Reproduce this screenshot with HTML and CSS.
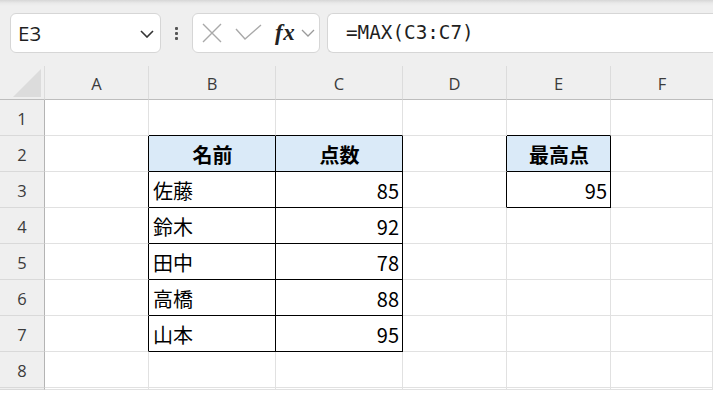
FILE: index.html
```html
<!DOCTYPE html>
<html lang="ja">
<head>
<meta charset="utf-8">
<title>Excel MAX</title>
<link rel="stylesheet" href="styles.css">
</head>
<body>
<div class="app">
  <div class="toolbar">
    <div class="namebox">
      <span class="name">E3</span>
      <svg class="chev" width="14" height="8" viewBox="0 0 14 8"><polyline points="1,1 7,7 13,1" fill="none" stroke="#333" stroke-width="1.6"/></svg>
    </div>
    <div class="dots"><i></i><i></i><i></i></div>
    <div class="fxbox">
      <svg class="ico" width="20" height="20" viewBox="0 0 20 20"><path d="M1 1 L19 19 M19 1 L1 19" stroke="#a9a9a9" stroke-width="1.4" fill="none"/></svg>
      <svg class="ico" width="28" height="18" viewBox="0 0 28 18"><polyline points="1,5 10,15 26,1" stroke="#a9a9a9" stroke-width="1.4" fill="none"/></svg>
      <span class="fx">fx</span>
      <svg class="chev2" width="14" height="9" viewBox="0 0 14 9"><polyline points="1,1 7,7 13,1" fill="none" stroke="#9a9a9a" stroke-width="1.3"/></svg>
    </div>
    <div class="formula">=MAX(C3:C7)</div>
  </div>
  <div class="sheet">
    <div class="corner"><span class="tri"></span></div>
    <div class="ch">A</div><div class="ch">B</div><div class="ch">C</div><div class="ch">D</div><div class="ch">E</div><div class="ch">F</div>

    <div class="rh">1</div>
    <div class="c"></div><div class="c bb"></div><div class="c bb"></div><div class="c"></div><div class="c bb"></div><div class="c"></div>

    <div class="rh">2</div>
    <div class="c br"></div><div class="c t hd">名前</div><div class="c t hd">点数</div><div class="c br"></div><div class="c t hd">最高点</div><div class="c"></div>

    <div class="rh">3</div>
    <div class="c br"></div><div class="c t">佐藤</div><div class="c t num">85</div><div class="c br"></div><div class="c t num">95</div><div class="c"></div>

    <div class="rh">4</div>
    <div class="c br"></div><div class="c t">鈴木</div><div class="c t num">92</div><div class="c"></div><div class="c"></div><div class="c"></div>

    <div class="rh">5</div>
    <div class="c br"></div><div class="c t">田中</div><div class="c t num">78</div><div class="c"></div><div class="c"></div><div class="c"></div>

    <div class="rh">6</div>
    <div class="c br"></div><div class="c t">高橋</div><div class="c t num">88</div><div class="c"></div><div class="c"></div><div class="c"></div>

    <div class="rh">7</div>
    <div class="c br"></div><div class="c t">山本</div><div class="c t num">95</div><div class="c"></div><div class="c"></div><div class="c"></div>

    <div class="rh">8</div>
    <div class="c"></div><div class="c"></div><div class="c"></div><div class="c"></div><div class="c"></div><div class="c"></div>

    <div class="rh"></div>
    <div class="c"></div><div class="c"></div><div class="c"></div><div class="c"></div><div class="c"></div><div class="c"></div>
  </div>
</div>
</body>
</html>
```

FILE: styles.css
```css
* { box-sizing: border-box; }
html, body { margin: 0; padding: 0; }
body {
  width: 713px;
  height: 398px;
  overflow: hidden;
  background: #ffffff;
  font-family: "Open Sans", "Noto Sans", sans-serif;
}
.app { width: 713px; height: 398px; overflow: hidden; }

.toolbar {
  height: 66px;
  background: linear-gradient(#d6d6d6 0px, #e9e9e9 3px, #efefef 6px, #efefef 100%);
  display: flex;
  align-items: flex-start;
  padding-top: 13px;
  padding-left: 10px;
  white-space: nowrap;
}
.namebox {
  width: 151px;
  height: 40px;
  background: #fff;
  border: 1px solid #d6d6d6;
  border-radius: 6px;
  display: flex;
  align-items: center;
  justify-content: space-between;
  padding: 0 6px 0 7px;
  flex: none;
}
.name { font-size: 20.5px; color: #1f1f1f; line-height: 1; margin-top: 1px; }
.chev { margin-top: 1px; }
.dots {
  width: 31px;
  height: 40px;
  display: flex;
  flex-direction: column;
  align-items: center;
  justify-content: center;
  gap: 2px;
  flex: none;
}
.dots i { display: block; width: 3px; height: 3px; background: #555; border-radius: 1px; }
.fxbox {
  width: 128px;
  height: 40px;
  background: #fff;
  border: 1px solid #d6d6d6;
  border-radius: 6px;
  display: flex;
  align-items: center;
  padding-left: 9px;
  flex: none;
}
.fxbox .ico:nth-child(1) { margin-right: 13px; }
.fxbox .ico:nth-child(2) { margin-right: 12px; margin-top: -1px; }
.fx {
  font-family: "Liberation Serif", "DejaVu Serif", serif;
  font-style: italic;
  font-weight: bold;
  font-size: 23px;
  color: #222;
  line-height: 1;
  margin-top: -2px;
  margin-right: 6px;
  letter-spacing: 0.5px;
}
.chev2 { margin-top: 1px; }
.formula {
  margin-left: 7px;
  width: 400px;
  height: 40px;
  background: #fff;
  border: 1px solid #d6d6d6;
  border-radius: 6px 0 0 6px;
  border-right: none;
  padding-left: 18px;
  font-family: "DejaVu Sans Mono", "Liberation Mono", monospace;
  font-size: 19.3px;
  line-height: 38px;
  color: #1f1f1f;
  flex: none;
}

.sheet {
  display: grid;
  grid-template-columns: 45px 104px 127px 127px 104px 104px 1fr;
  grid-template-rows: 34px repeat(8, 36px);
}
.corner {
  background: #efefef;
  border-right: 1px solid #dcdcdc;
  border-bottom: 1px solid #bdbdbd;
  position: relative;
}
.tri {
  position: absolute;
  right: 3px;
  bottom: 2px;
  width: 0;
  height: 0;
  border-style: solid;
  border-width: 0 0 28px 28px;
  border-color: transparent transparent #dcdcdc transparent;
}
.ch {
  background: #efefef;
  border-bottom: 1px solid #bdbdbd;
  border-right: 1px solid #dcdcdc;
  display: flex;
  align-items: center;
  justify-content: center;
  padding-top: 2px;
  font-size: 16.5px;
  color: #3b3b3b;
  background-clip: padding-box;
}
.ch:nth-child(7) { border-right: none; }
.rh {
  background: #efefef;
  border-right: 1px solid #b4b4b4;
  border-bottom: 1px solid #d9d9d9;
  display: flex;
  align-items: center;
  justify-content: center;
  padding-top: 1px;
  font-size: 16.5px;
  color: #3b3b3b;
}
.c {
  border-right: 1px solid #e1e1e1;
  border-bottom: 1px solid #e1e1e1;
}
.c.bb { border-bottom-color: #000; }
.c.br { border-right-color: #000; }
.c.t {
  border-right-color: #000;
  border-bottom-color: #000;
  font-family: "Noto Sans CJK JP", "Noto Sans", sans-serif;
  font-size: 20px;
  color: #000;
  display: flex;
  align-items: center;
  padding: 2px 3px 0 4px;
  line-height: 1;
}
.c.hd {
  background: #daeaf8;
  font-weight: bold;
  justify-content: center;
}
.c.num { justify-content: flex-end; }
```
